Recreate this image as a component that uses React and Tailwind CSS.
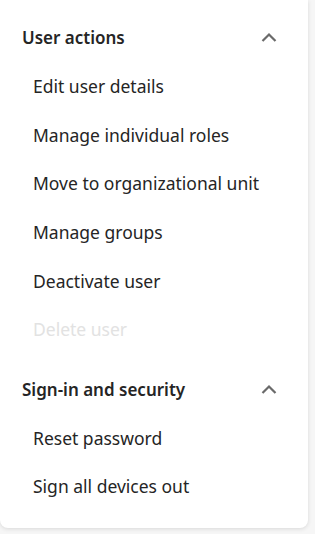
const sections = [
  {
    title: 'User actions',
    items: [
      { label: 'Edit user details' },
      { label: 'Manage individual roles' },
      { label: 'Move to organizational unit' },
      { label: 'Manage groups' },
      { label: 'Deactivate user' },
      { label: 'Delete user', disabled: true },
    ],
  },
  {
    title: 'Sign-in and security',
    items: [{ label: 'Reset password' }, { label: 'Sign all devices out' }],
  },
];

function ChevronUp() {
  return (
    <svg width="18" height="18" viewBox="0 0 18 18" fill="none">
      <path d="M2.5 12 9 5.5l6.5 6.5" stroke="#6a6a6a" strokeWidth="2.2" />
    </svg>
  );
}

export default function App() {
  return (
    <div
      className="w-[315px] h-[534px] bg-[#f6f6f6] overflow-hidden"
      style={{ fontFamily: '"Noto Sans", "Open Sans", sans-serif' }}
    >
      <div className="w-[308px] bg-white rounded-b-lg shadow-[0_1px_4px_rgba(0,0,0,0.12)] pt-[14px] pb-[17px] flex flex-col gap-[12px]">
        {sections.map((s) => (
          <div key={s.title} className="flex flex-col">
            <div className="h-12 flex items-center justify-between pl-[22px] pr-[30px]">
              <span className="text-[17px] font-semibold text-[#252525]">{s.title}</span>
              <ChevronUp />
            </div>
            {s.items.map((it) => (
              <div
                key={it.label}
                className={`h-[48.6px] flex items-center pl-[33px] text-[17.5px] ${
                  it.disabled ? 'text-[#e2e2e2]' : 'text-[#252525]'
                }`}
              >
                {it.label}
              </div>
            ))}
          </div>
        ))}
      </div>
    </div>
  );
}
